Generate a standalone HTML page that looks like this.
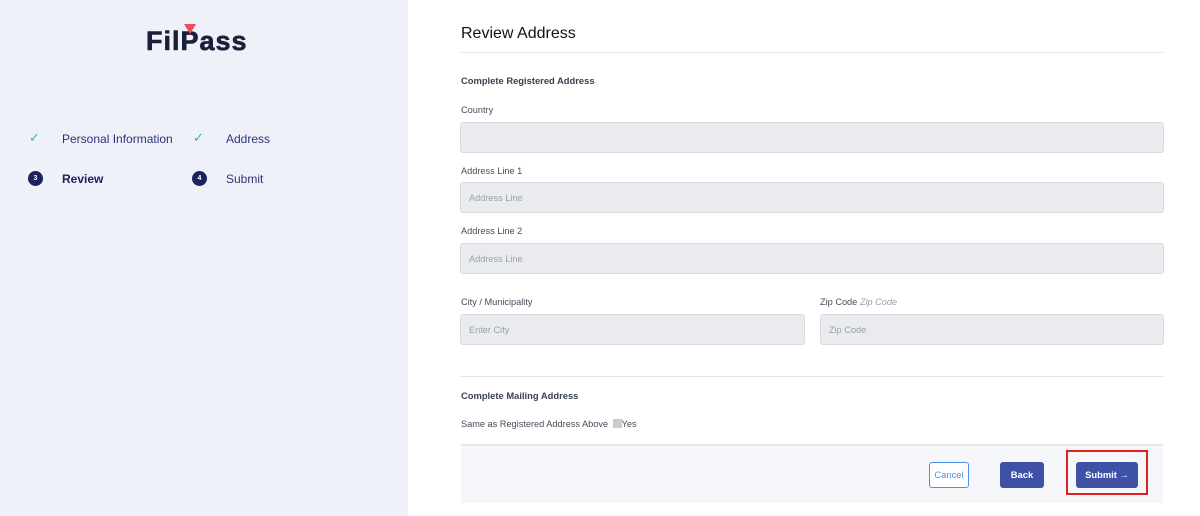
<!DOCTYPE html>
<html><head><style>
*{margin:0;padding:0;box-sizing:border-box}
body{width:1200px;height:516px;background:#fff;font-family:"Liberation Sans",sans-serif;position:relative;overflow:hidden}
.left{position:absolute;left:0;top:0;width:408px;height:516px;background:#eef1f7}
.abs{position:absolute}
.step{position:absolute;font-size:12px;color:#2c3478}
.chk{position:absolute;color:#3bb58a;font-size:13px}
.num{position:absolute;width:15px;height:15px;border-radius:50%;background:#1c2260;color:#fff;font-size:7px;font-weight:bold;text-align:center;line-height:15px}
.lbl{position:absolute;font-size:9.2px;color:#454b58}
.inp{position:absolute;height:31px;background:#e9ebef;border:1px solid #d8dbe0;border-radius:3px;font-size:9.2px;color:#9aa0aa;padding-left:8px;line-height:31px}
.h{position:absolute;font-size:9.4px;font-weight:bold;color:#3a4250}
.btn{position:absolute;border-radius:3px;font-size:9.4px;font-weight:bold;text-align:center;color:#fff;background:#3e51a6}
</style></head><body>
<div class="left">
<div class="abs" style="left:146px;top:26px;font-size:27px;font-weight:bold;color:#1b1f3a;letter-spacing:1px;-webkit-text-stroke:0.6px #1b1f3a">FilPass</div>
<svg class="abs" style="left:184px;top:24px" width="14" height="12"><polygon points="0,0 12,0 6,10" fill="#f0505b"/></svg>
<div class="chk" style="left:29px;top:130px">✓</div>
<div class="step" style="left:62px;top:132px">Personal Information</div>
<div class="chk" style="left:193px;top:130px">✓</div>
<div class="step" style="left:226px;top:132px">Address</div>
<div class="num" style="left:28px;top:171px">3</div>
<div class="step" style="left:62px;top:172px;font-weight:bold;color:#1c2260">Review</div>
<div class="num" style="left:192px;top:171px">4</div>
<div class="step" style="left:226px;top:172px">Submit</div>
</div>
<div class="abs" style="left:461px;top:25px;font-size:16px;color:#111">Review Address</div>
<div class="abs" style="left:461px;top:52px;width:702px;height:1px;background:#e2e4e8"></div>
<div class="h" style="left:461px;top:75px">Complete Registered Address</div>
<div class="lbl" style="left:461px;top:105px">Country</div>
<div class="inp" style="left:460px;top:122px;width:704px"></div>
<div class="lbl" style="left:461px;top:166px">Address Line 1</div>
<div class="inp" style="left:460px;top:182px;width:704px">Address Line</div>
<div class="lbl" style="left:461px;top:226px">Address Line 2</div>
<div class="inp" style="left:460px;top:243px;width:704px">Address Line</div>
<div class="lbl" style="left:461px;top:297px">City / Municipality</div>
<div class="inp" style="left:460px;top:314px;width:345px">Enter City</div>
<div class="lbl" style="left:820px;top:297px">Zip Code <i style="color:#9aa0aa">Zip Code</i></div>
<div class="inp" style="left:820px;top:314px;width:344px">Zip Code</div>
<div class="abs" style="left:461px;top:376px;width:702px;height:1px;background:#e2e4e8"></div>
<div class="h" style="left:461px;top:390px">Complete Mailing Address</div>
<div class="lbl" style="left:461px;top:419px">Same as Registered Address Above <span style="display:inline-block;width:9px;height:9px;background:#ccc;vertical-align:-1px;margin-left:2px"></span>Yes</div>
<div class="abs" style="left:461px;top:444px;width:702px;height:59px;background:#f5f6fa;border-top:2px solid #e5e7ee"></div>
<div class="btn" style="left:929px;top:462px;width:40px;height:26px;line-height:24px;background:#fff;border:1px solid #4a8fe8;color:#4a8fe8;font-weight:normal">Cancel</div>
<div class="btn" style="left:1000px;top:462px;width:44px;height:26px;line-height:26px">Back</div>
<div class="abs" style="left:1066px;top:450px;width:82px;height:45px;border:2px solid #e02020"></div>
<div class="btn" style="left:1076px;top:462px;width:62px;height:26px;line-height:26px">Submit →</div>
</body></html>
